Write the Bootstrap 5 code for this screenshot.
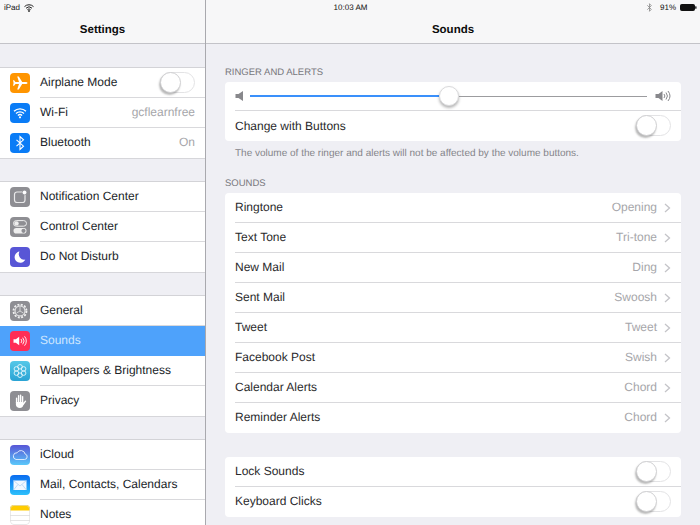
<!DOCTYPE html>
<html lang="en">
<head>
<meta charset="utf-8">
<title>Sounds</title>
<link rel="stylesheet" href="https://cdn.jsdelivr.net/npm/bootstrap@5.3.0/dist/css/bootstrap.min.css">
<style>
html,body{height:525px;overflow:hidden}
body{font-family:"Liberation Sans",Arial,sans-serif;font-size:12px;color:#2a2a2c;background:#efeff4;position:relative;text-rendering:geometricPrecision}
.status-strip{position:absolute;top:1px;left:0;width:700px;height:13px;padding:0 3px 0 4px;font-size:8px;line-height:13px;color:#111;display:grid;grid-template-columns:1fr auto 1fr;z-index:2}
.pane-left{width:206px;height:525px;border-right:1px solid #a9a9ae;flex:none}
.pane-right{flex:1 1 auto;height:525px;min-width:0}
.top-bar{height:44px;background:#f7f7f8;border-bottom:1px solid #c3c3c8;font-size:11.5px;font-weight:700;color:#0b0b0b;padding-top:16px;line-height:28px;text-align:center}
.side-scroll{padding-top:23.5px}
.side-group{background:#fff;box-shadow:0 -1px 0 #d3d3d7,0 1px 0 #d6d6da;margin-bottom:24px;border-radius:0}
.side-row{height:30px;padding:0 10px;gap:10px;background:#fff;border:0;border-radius:0;font-size:12px}
.side-row .row-text{flex:1 1 auto;align-self:stretch;display:flex;justify-content:space-between;padding-right:10px;margin-right:-10px;align-items:center;border-bottom:1px solid #d9d9dc}
.side-row:last-child .row-text{border-bottom-color:transparent}
.side-row.picked{background:#4ea2fb;color:#cfe6fe}
.side-row.picked .row-text{border-bottom-color:transparent}
.side-row svg.tile{width:20px;height:20px;flex:none;border-radius:4px}
.val{color:#a6a6aa}
.main-scroll{padding:19px 19px 0 19px}
.sec-head{font-size:9.5px;line-height:14px;color:#77777c;height:19px;padding-top:3px}
.panel-white{background:#fff;border-radius:4px;border:0;margin-bottom:24px}
.panel-white.tight{margin-bottom:0}
.panel-row{height:30px;padding:0 0 0 10px;background:transparent;border:0;border-radius:0;font-size:12px;color:#2a2a2c}
.panel-row.start{height:29px}
.row-line{flex:1 1 auto;min-width:0;align-self:stretch;display:flex;align-items:center;padding-right:10px;border-bottom:1px solid #d9d9dc}
.panel-row:last-child .row-line{border-bottom-color:transparent}
.panel-white:not(.tight) .row-line>span{margin-bottom:1px}
.hint{font-size:10px;line-height:14px;color:#85858a;padding:6px 10px 0;height:33px}
.chev{width:7px;height:10px;margin-left:7px;flex:none}
.switch-track{width:35px;height:21px;border:1px solid #e3e3e5;border-radius:11px;background:#fff;flex:none}
.switch-knob{width:21px;height:21px;margin:-1px;border-radius:50%;background:#fff;border:1px solid #d0d0d2;box-shadow:-1px 2px 2px rgba(0,0,0,.28)}
.slider-line{margin-left:1px}
.volume-fill{height:2px;background:#3a90fb}
.volume-rest{height:1px;background:#9c9c9f;flex:1 1 auto}
.volume-knob{width:20px;height:20px;flex:none;border-radius:50%;background:#fff;border:1px solid #dadadc;box-shadow:0 2px 3px rgba(0,0,0,.3)}
</style>
</head>
<body>
<div class="status-strip">
  <div class="d-flex align-items-center gap-1">iPad
    <svg width="10" height="8" viewBox="0 0 10 8"><path d="M.5 2.600a6.400 6.400 0 0 1 9 0M2 4.200a4.300 4.300 0 0 1 6 0M3.400 5.700a2.200 2.200 0 0 1 3.200 0" fill="none" stroke="#222" stroke-width="1"/><circle cx="5" cy="7" r=".9" fill="#222"/></svg>
  </div>
  <div class="text-center">10:03 AM</div>
  <div class="d-flex align-items-center justify-content-end gap-1">
    <svg width="5" height="9" viewBox="0 0 5 9" class="me-1"><path d="M.3 2.300l4 4-1.800 2V.7l1.800 2-4 4" fill="none" stroke="#888" stroke-width=".8"/></svg>91%
    <svg width="17" height="7" viewBox="0 0 17 7"><rect x=".5" y=".5" width="14" height="6" rx="1" fill="#111" stroke="#111"/><rect x="15.200" y="2.200" width="1.300" height="2.600" rx=".5" fill="#111"/></svg>
  </div>
</div>
<div class="d-flex">
  <div class="pane-left">
    <div class="top-bar">Settings</div>
    <div class="side-scroll">
      <div class="list-group side-group">
        <div class="list-group-item d-flex align-items-center side-row">
          <svg class="tile" viewBox="0 0 20 20"><rect width="20" height="20" fill="#ff9500"/><path d="M17.500 10c0 .7-1 1-2 1h-3.300L8.800 16.500H7.200L9 11H5.500L4.100 12.800H3L3.600 10 3 7.200h1.100L5.500 9H9L7.200 3.500h1.600L12.200 9h3.300c1 0 2 .3 2 1z" fill="#fff"/></svg>
          <div class="row-text"><span>Airplane Mode</span><div class="switch-track"><div class="switch-knob"></div></div></div>
        </div>
        <div class="list-group-item d-flex align-items-center side-row">
          <svg class="tile" viewBox="0 0 20 20"><rect width="20" height="20" fill="#0a7cf6"/><path d="M4 8.300a8.600 8.600 0 0 1 12 0M6 10.500a5.600 5.600 0 0 1 8 0M7.900 12.500a3 3 0 0 1 4.200 0" fill="none" stroke="#fff" stroke-width="1.300"/><circle cx="10" cy="14.300" r="1.100" fill="#fff"/></svg>
          <div class="row-text"><span>Wi-Fi</span><span class="val">gcflearnfree</span></div>
        </div>
        <div class="list-group-item d-flex align-items-center side-row">
          <svg class="tile" viewBox="0 0 20 20"><rect width="20" height="20" fill="#0a7cf6"/><path d="M6.500 6.800l7 6.400L10 16.500v-13l3.500 3.300-7 6.400" fill="none" stroke="#fff" stroke-width="1.100"/></svg>
          <div class="row-text"><span>Bluetooth</span><span class="val">On</span></div>
        </div>
      </div>
      <div class="list-group side-group">
        <div class="list-group-item d-flex align-items-center side-row">
          <svg class="tile" viewBox="0 0 20 20"><rect width="20" height="20" fill="#8e8e93"/><rect x="4.500" y="5" width="10.500" height="10.500" rx="2.500" fill="none" stroke="#e9e9ea" stroke-width="1.200"/><circle cx="14.500" cy="5.500" r="2.300" fill="#fff" stroke="#8e8e93" stroke-width=".7"/></svg>
          <div class="row-text"><span>Notification Center</span></div>
        </div>
        <div class="list-group-item d-flex align-items-center side-row">
          <svg class="tile" viewBox="0 0 20 20"><rect width="20" height="20" fill="#8e8e93"/><rect x="3.500" y="3.600" width="13" height="5.600" rx="2.800" fill="none" stroke="#eee" stroke-width="1"/><circle cx="6.500" cy="6.400" r="2.200" fill="#eee"/><rect x="3.500" y="11" width="13" height="5.600" rx="2.800" fill="#eee"/><circle cx="13.500" cy="13.800" r="2.100" fill="#8e8e93"/></svg>
          <div class="row-text"><span>Control Center</span></div>
        </div>
        <div class="list-group-item d-flex align-items-center side-row">
          <svg class="tile" viewBox="0 0 20 20"><rect width="20" height="20" fill="#5856d6"/><path d="M9.500 4.600a5.600 5.600 0 1 0 5.800 7.900 5.400 5.400 0 0 1-5.800-7.900z" fill="#fff"/></svg>
          <div class="row-text"><span>Do Not Disturb</span></div>
        </div>
      </div>
      <div class="list-group side-group">
        <div class="list-group-item d-flex align-items-center side-row">
          <svg class="tile" viewBox="0 0 20 20"><rect width="20" height="20" fill="#8e8e93"/><circle cx="10" cy="10" r="6.500" fill="none" stroke="#f0f0f0" stroke-width="1.800" stroke-dasharray="2 1.400"/><circle cx="10" cy="10" r="5" fill="none" stroke="#f0f0f0" stroke-width="1"/><path d="M10 10V6M10 10l3.400 2M10 10l-3.400 2" stroke="#f0f0f0" stroke-width=".7"/></svg>
          <div class="row-text"><span>General</span></div>
        </div>
        <div class="list-group-item d-flex align-items-center side-row picked">
          <svg class="tile" viewBox="0 0 20 20"><rect width="20" height="20" fill="#ff2d55"/><path d="M3.500 8.300h2.300l3.400-2.600v8.600l-3.400-2.600H3.500z" fill="#fff"/><path d="M11 8a3 3 0 0 1 0 4M12.700 6.700a5 5 0 0 1 0 6.600M14.500 5.300a7 7 0 0 1 0 9.400" fill="none" stroke="#fff" stroke-width=".9"/></svg>
          <div class="row-text"><span>Sounds</span></div>
        </div>
        <div class="list-group-item d-flex align-items-center side-row">
          <svg class="tile" viewBox="0 0 20 20"><defs><linearGradient id="wallgrad" x1="0" y1="0" x2="0" y2="1"><stop offset="0" stop-color="#56c8e8"/><stop offset="1" stop-color="#2aa3d4"/></linearGradient></defs><rect width="20" height="20" fill="url(#wallgrad)"/><g fill="none" stroke="#e6f7fc" stroke-width=".9"><circle cx="10" cy="5.800" r="2.300"/><circle cx="10" cy="14.200" r="2.300"/><circle cx="6.400" cy="7.900" r="2.300"/><circle cx="13.600" cy="7.900" r="2.300"/><circle cx="6.400" cy="12.100" r="2.300"/><circle cx="13.600" cy="12.100" r="2.300"/></g></svg>
          <div class="row-text"><span>Wallpapers &amp; Brightness</span></div>
        </div>
        <div class="list-group-item d-flex align-items-center side-row">
          <svg class="tile" viewBox="0 0 20 20"><rect width="20" height="20" fill="#8e8e93"/><path d="M6.600 12V7.200M8.600 12V4.800M10.600 12V4.200M12.600 12V5.600M13.200 13.400l2.300-3.200" fill="none" stroke="#fff" stroke-width="1.400" stroke-linecap="round"/><path d="M5.900 11h7.400v2.500c0 2-1.300 3.500-3.500 3.500-2.200 0-3.900-1.500-3.900-3.500z" fill="#fff"/></svg>
          <div class="row-text"><span>Privacy</span></div>
        </div>
      </div>
      <div class="list-group side-group">
        <div class="list-group-item d-flex align-items-center side-row">
          <svg class="tile" viewBox="0 0 20 20"><defs><linearGradient id="cloudgrad" x1="0" y1="0" x2="0" y2="1"><stop offset="0" stop-color="#5856d6"/><stop offset="1" stop-color="#5ac8fa"/></linearGradient></defs><rect width="20" height="20" fill="url(#cloudgrad)"/><path d="M6 14.500h8.500a2.800 2.800 0 0 0 .6-5.500 4.300 4.300 0 0 0-8-1.200A3.400 3.400 0 0 0 6 14.500z" fill="none" stroke="#e8f2ff" stroke-width=".9"/></svg>
          <div class="row-text"><span>iCloud</span></div>
        </div>
        <div class="list-group-item d-flex align-items-center side-row">
          <svg class="tile" viewBox="0 0 20 20"><defs><linearGradient id="mailgrad" x1="0" y1="0" x2="0" y2="1"><stop offset="0" stop-color="#0a6cf0"/><stop offset="1" stop-color="#2cc0fb"/></linearGradient></defs><rect width="20" height="20" fill="url(#mailgrad)"/><rect x="3.500" y="5.500" width="13" height="9.500" fill="#f2f8ff"/><path d="M3.500 5.500l6.500 5.500 6.500-5.500M3.500 15l4.500-5.500M16.500 15L12 9.500" fill="none" stroke="#a9cdf0" stroke-width=".7"/></svg>
          <div class="row-text"><span>Mail, Contacts, Calendars</span></div>
        </div>
        <div class="list-group-item d-flex align-items-center side-row">
          <svg class="tile" viewBox="0 0 20 20"><rect width="20" height="20" fill="#fff"/><rect width="20" height="5.500" fill="#ffcc00"/><path d="M0 10.500h20M0 15.500h20" stroke="#d8d8d8" stroke-width=".7"/><rect x=".4" y=".4" width="19.200" height="19.200" rx="3.600" fill="none" stroke="#ddd" stroke-width=".7"/></svg>
          <div class="row-text"><span>Notes</span></div>
        </div>
      </div>
    </div>
  </div>
  <div class="pane-right">
    <div class="top-bar">Sounds</div>
    <div class="main-scroll">
      <div class="sec-head">RINGER AND ALERTS</div>
      <div class="list-group panel-white tight">
        <div class="list-group-item d-flex panel-row start"><div class="row-line">
          <svg width="10" height="12" viewBox="0 0 10 12" class="me-1 flex-none"><path d="M.5 4h3L8 1v10L3.500 8h-3z" fill="#88888c"/></svg>
          <div class="d-flex align-items-center flex-grow-1 slider-line">
            <div class="volume-fill" style="width:189px"></div>
            <div class="volume-knob"></div>
            <div class="volume-rest"></div>
          </div>
          <svg width="16" height="14" viewBox="0 0 16 14" class="ms-2 flex-none"><path d="M.5 5h3L7.500 2v10l-4-3h-3z" fill="#88888c"/><path d="M9 5a3 3 0 0 1 0 4M11 3.500a5.500 5.500 0 0 1 0 7M13 2a8 8 0 0 1 0 10" fill="none" stroke="#88888c" stroke-width="1"/></svg>
        </div></div>
        <div class="list-group-item d-flex panel-row"><div class="row-line justify-content-between">
          <span>Change with Buttons</span><div class="switch-track"><div class="switch-knob"></div></div>
        </div></div>
      </div>
      <div class="hint">The volume of the ringer and alerts will not be affected by the volume buttons.</div>
      <div class="sec-head">SOUNDS</div>
      <div class="list-group panel-white">
        <div class="list-group-item d-flex panel-row"><div class="row-line"><span class="flex-grow-1">Ringtone</span><span class="val">Opening</span><svg class="chev" viewBox="0 0 7 10"><path d="M1 1l4.500 4L1 9" fill="none" stroke="#c4c4c8" stroke-width="1.300"/></svg></div></div>
        <div class="list-group-item d-flex panel-row"><div class="row-line"><span class="flex-grow-1">Text Tone</span><span class="val">Tri-tone</span><svg class="chev" viewBox="0 0 7 10"><path d="M1 1l4.500 4L1 9" fill="none" stroke="#c4c4c8" stroke-width="1.300"/></svg></div></div>
        <div class="list-group-item d-flex panel-row"><div class="row-line"><span class="flex-grow-1">New Mail</span><span class="val">Ding</span><svg class="chev" viewBox="0 0 7 10"><path d="M1 1l4.500 4L1 9" fill="none" stroke="#c4c4c8" stroke-width="1.300"/></svg></div></div>
        <div class="list-group-item d-flex panel-row"><div class="row-line"><span class="flex-grow-1">Sent Mail</span><span class="val">Swoosh</span><svg class="chev" viewBox="0 0 7 10"><path d="M1 1l4.500 4L1 9" fill="none" stroke="#c4c4c8" stroke-width="1.300"/></svg></div></div>
        <div class="list-group-item d-flex panel-row"><div class="row-line"><span class="flex-grow-1">Tweet</span><span class="val">Tweet</span><svg class="chev" viewBox="0 0 7 10"><path d="M1 1l4.500 4L1 9" fill="none" stroke="#c4c4c8" stroke-width="1.300"/></svg></div></div>
        <div class="list-group-item d-flex panel-row"><div class="row-line"><span class="flex-grow-1">Facebook Post</span><span class="val">Swish</span><svg class="chev" viewBox="0 0 7 10"><path d="M1 1l4.500 4L1 9" fill="none" stroke="#c4c4c8" stroke-width="1.300"/></svg></div></div>
        <div class="list-group-item d-flex panel-row"><div class="row-line"><span class="flex-grow-1">Calendar Alerts</span><span class="val">Chord</span><svg class="chev" viewBox="0 0 7 10"><path d="M1 1l4.500 4L1 9" fill="none" stroke="#c4c4c8" stroke-width="1.300"/></svg></div></div>
        <div class="list-group-item d-flex panel-row"><div class="row-line"><span class="flex-grow-1">Reminder Alerts</span><span class="val">Chord</span><svg class="chev" viewBox="0 0 7 10"><path d="M1 1l4.500 4L1 9" fill="none" stroke="#c4c4c8" stroke-width="1.300"/></svg></div></div>
      </div>
      <div class="list-group panel-white">
        <div class="list-group-item d-flex panel-row"><div class="row-line justify-content-between"><span>Lock Sounds</span><div class="switch-track"><div class="switch-knob"></div></div></div></div>
        <div class="list-group-item d-flex panel-row"><div class="row-line justify-content-between"><span>Keyboard Clicks</span><div class="switch-track"><div class="switch-knob"></div></div></div></div>
      </div>
    </div>
  </div>
</div>
<script src="https://cdn.jsdelivr.net/npm/bootstrap@5.3.0/dist/js/bootstrap.bundle.min.js"></script>
</body>
</html>
